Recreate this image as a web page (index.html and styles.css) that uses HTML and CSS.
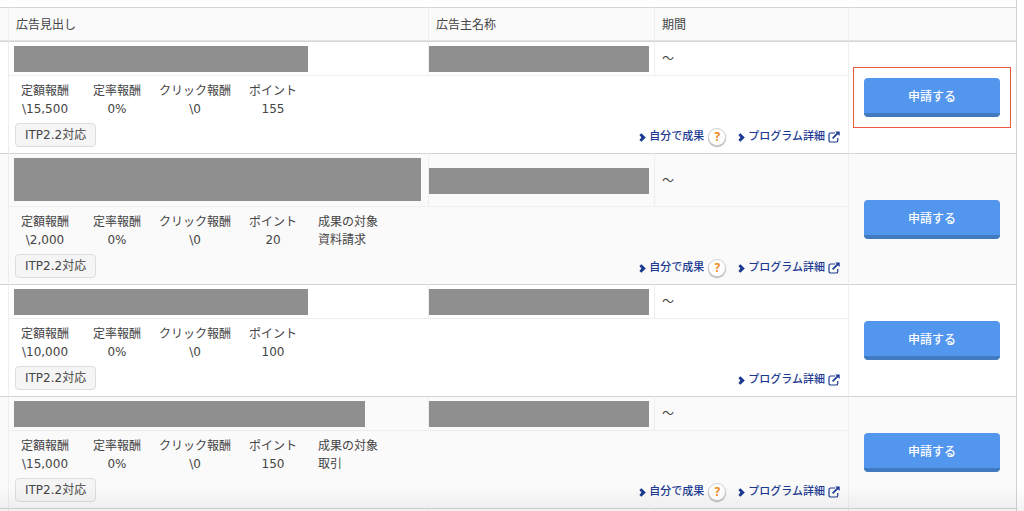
FILE: index.html
```html
<!DOCTYPE html>
<html lang="ja">
<head>
    <meta charset="utf-8">
    <meta name="viewport" content="width=device-width, initial-scale=1.0">
    <title>プログラム検索</title>
    <link rel="stylesheet" href="styles.css">
</head>
<body>
    <svg class="defs" width="0" height="0">
        <symbol id="arrow" viewBox="0 0 7 9">
            <path d="M0.4 2 L2.4 0.2 L6.8 4.5 L2.4 8.8 L0.4 7 L2.4 4.5 Z" fill="currentColor"/>
        </symbol>
        <symbol id="external" viewBox="0 0 12 12">
            <path d="M7 2 H2.6 Q1 2 1 3.6 V9.4 Q1 11 2.6 11 H8.2 Q9.8 11 9.8 9.4 V7" fill="none" stroke="currentColor" stroke-width="1.2"/>
            <path d="M4.6 7.4 L9.8 2.2" stroke="currentColor" stroke-width="1.7"/>
            <path d="M7.2 0.4 H11.7 V4.9 Z" fill="currentColor"/>
        </symbol>
    </svg>

    <div class="content">
        <table class="programs">
            <colgroup>
                <col class="col-edge">
                <col>
                <col class="col-owner">
                <col class="col-period">
                <col class="col-apply">
            </colgroup>
            <thead>
                <tr>
                    <th></th>
                    <th>広告見出し</th>
                    <th>広告主名称</th>
                    <th>期間</th>
                    <th></th>
                </tr>
            </thead>

            <tbody>
                <tr class="title">
                    <td rowspan="2"></td>
                    <td><div class="mask mask-s"></div></td>
                    <td class="owner"><div class="mask"></div></td>
                    <td class="period">～</td>
                    <td rowspan="2" class="apply"><div class="marked"><button type="button" class="btn">申請する</button></div></td>
                </tr>
                <tr>
                    <td colspan="3" class="detail">
                        <div class="detail-row">
                            <div>
                                <dl class="rewards">
                                    <div><dt>定額報酬</dt><dd>\15,500</dd></div>
                                    <div><dt>定率報酬</dt><dd>0%</dd></div>
                                    <div><dt>クリック報酬</dt><dd>\0</dd></div>
                                    <div><dt>ポイント</dt><dd>155</dd></div>
                                </dl>
                                <span class="badge">ITP2.2対応</span>
                            </div>
                            <div class="links">
                                <a href="#"><svg class="arrow"><use href="#arrow"/></svg>自分で成果</a>
                                <button type="button" class="help">?</button>
                                <a href="#"><svg class="arrow"><use href="#arrow"/></svg>プログラム詳細<svg class="external"><use href="#external"/></svg></a>
                            </div>
                        </div>
                    </td>
                </tr>
            </tbody>

            <tbody>
                <tr class="title">
                    <td rowspan="2"></td>
                    <td><div class="mask mask-l"></div></td>
                    <td class="owner"><div class="mask"></div></td>
                    <td class="period">～</td>
                    <td rowspan="2" class="apply"><button type="button" class="btn">申請する</button></td>
                </tr>
                <tr>
                    <td colspan="3" class="detail">
                        <div class="detail-row">
                            <div>
                                <dl class="rewards">
                                    <div><dt>定額報酬</dt><dd>\2,000</dd></div>
                                    <div><dt>定率報酬</dt><dd>0%</dd></div>
                                    <div><dt>クリック報酬</dt><dd>\0</dd></div>
                                    <div><dt>ポイント</dt><dd>20</dd></div>
                                    <div class="target"><dt>成果の対象</dt><dd>資料請求</dd></div>
                                </dl>
                                <span class="badge">ITP2.2対応</span>
                            </div>
                            <div class="links">
                                <a href="#"><svg class="arrow"><use href="#arrow"/></svg>自分で成果</a>
                                <button type="button" class="help">?</button>
                                <a href="#"><svg class="arrow"><use href="#arrow"/></svg>プログラム詳細<svg class="external"><use href="#external"/></svg></a>
                            </div>
                        </div>
                    </td>
                </tr>
            </tbody>

            <tbody>
                <tr class="title">
                    <td rowspan="2"></td>
                    <td><div class="mask mask-s"></div></td>
                    <td class="owner"><div class="mask"></div></td>
                    <td class="period">～</td>
                    <td rowspan="2" class="apply"><button type="button" class="btn">申請する</button></td>
                </tr>
                <tr>
                    <td colspan="3" class="detail">
                        <div class="detail-row">
                            <div>
                                <dl class="rewards">
                                    <div><dt>定額報酬</dt><dd>\10,000</dd></div>
                                    <div><dt>定率報酬</dt><dd>0%</dd></div>
                                    <div><dt>クリック報酬</dt><dd>\0</dd></div>
                                    <div><dt>ポイント</dt><dd>100</dd></div>
                                </dl>
                                <span class="badge">ITP2.2対応</span>
                            </div>
                            <div class="links">
                                <a href="#"><svg class="arrow"><use href="#arrow"/></svg>プログラム詳細<svg class="external"><use href="#external"/></svg></a>
                            </div>
                        </div>
                    </td>
                </tr>
            </tbody>

            <tbody>
                <tr class="title">
                    <td rowspan="2"></td>
                    <td><div class="mask mask-m"></div></td>
                    <td class="owner"><div class="mask"></div></td>
                    <td class="period">～</td>
                    <td rowspan="2" class="apply"><button type="button" class="btn">申請する</button></td>
                </tr>
                <tr>
                    <td colspan="3" class="detail">
                        <div class="detail-row">
                            <div>
                                <dl class="rewards">
                                    <div><dt>定額報酬</dt><dd>\15,000</dd></div>
                                    <div><dt>定率報酬</dt><dd>0%</dd></div>
                                    <div><dt>クリック報酬</dt><dd>\0</dd></div>
                                    <div><dt>ポイント</dt><dd>150</dd></div>
                                    <div class="target"><dt>成果の対象</dt><dd>取引</dd></div>
                                </dl>
                                <span class="badge">ITP2.2対応</span>
                            </div>
                            <div class="links">
                                <a href="#"><svg class="arrow"><use href="#arrow"/></svg>自分で成果</a>
                                <button type="button" class="help">?</button>
                                <a href="#"><svg class="arrow"><use href="#arrow"/></svg>プログラム詳細<svg class="external"><use href="#external"/></svg></a>
                            </div>
                        </div>
                    </td>
                </tr>
            </tbody>

            <tbody>
                <tr class="blank">
                    <td></td>
                    <td></td>
                    <td></td>
                    <td></td>
                    <td></td>
                </tr>
            </tbody>
        </table>
    </div>
    <div class="fade"></div>
</body>
</html>
```
FILE: styles.css
```css
* {
    box-sizing: border-box;
}
body {
    margin: 0;
    background: #fff;
    color: #444;
    font-family: "DejaVu Sans", "Noto Sans CJK JP", sans-serif;
    font-size: 12px;
    line-height: 18px;
}
.defs {
    position: absolute;
}
.content {
    margin-right: 7px;
    padding-top: 7px;
    border-right: 1px solid #d4d4d4;
}

/* table */
.programs {
    width: 100%;
    table-layout: fixed;
    border-collapse: separate;
    border-spacing: 0;
}
.col-edge {
    width: 9px;
}
.col-owner {
    width: 226px;
}
.col-period {
    width: 194px;
}
.col-apply {
    width: 167px;
}
th {
    height: 34px;
    padding: 2px 7px 0;
    background: #fafafa;
    border-top: 1px solid #d4d4d4;
    border-right: 1px solid #eee;
    border-bottom: 1px solid #e2e2e2;
    font-weight: normal;
    text-align: left;
}
td {
    padding: 0;
    border-right: 1px solid #eee;
}
th:first-child,
.title td:first-child {
    padding: 0;
}
th:last-child,
.title td:last-child,
.blank td:last-child {
    border-right: 0;
}
.title td {
    height: 35px;
    padding: 4px 5px 3px;
    border-top: 1px solid #d4d4d4;
    border-bottom: 1px solid #eee;
}
.title td[rowspan] {
    border-bottom: 0;
}
.title td.owner {
    padding: 4px 5px 3px 0;
}
.title td.period {
    padding: 1px 7px 0;
}
.title td.apply {
    padding: 0 16px 0 15px;
}
.blank td {
    height: 3px;
    border-top: 1px solid #d4d4d4;
}
tbody:nth-of-type(even) td {
    background: #fafafa;
}

.mask {
    height: 26px;
    background: #8f8f8f;
}
.mask-s {
    width: 294px;
}
.mask-m {
    width: 351px;
}
.mask-l {
    width: 407px;
    height: 43px;
    margin-bottom: 2px;
}

/* detail */
.detail {
    padding: 6px 8px 6px 6px;
}
.detail-row {
    display: flex;
    justify-content: space-between;
    align-items: flex-end;
}
.rewards {
    display: flex;
    gap: 12px;
    margin: 0 0 5px;
}
.rewards div {
    min-width: 60px;
    text-align: center;
}
.rewards .target {
    padding-left: 3px;
    text-align: left;
}
dd {
    margin: 0;
}
.badge {
    display: block;
    width: fit-content;
    padding: 2px 9px;
    background: #f5f5f5;
    border: 1px solid #ddd;
    border-radius: 4px;
}

.links {
    display: flex;
    align-items: center;
    height: 20px;
}
.links a {
    display: flex;
    align-items: center;
    color: #1c3a92;
    font-size: 11px;
    font-weight: 500;
    text-decoration: none;
}
.arrow {
    width: 7px;
    height: 9px;
    margin-right: 3px;
}
.external {
    width: 12px;
    height: 12px;
    margin-left: 3px;
}
.help {
    width: 18px;
    height: 18px;
    margin: 0 12px 0 4px;
    padding: 0;
    background: #fff;
    border: 1px solid #d4d4d4;
    border-radius: 50%;
    box-shadow: 0 1px 1px #aaa;
    color: #f08a24;
    font-family: "Open Sans", sans-serif;
    font-size: 12px;
    font-weight: bold;
    line-height: 16px;
}

/* apply button */
.btn {
    display: block;
    width: 100%;
    height: 39px;
    padding: 0;
    background: #5396ee;
    border: 0;
    border-bottom: 4px solid #417abf;
    border-radius: 4px;
    color: #fff;
    font-family: "Noto Sans CJK JP", sans-serif;
    font-size: 12px;
    font-weight: 500;
    cursor: pointer;
}
.marked {
    outline: 1px solid #ec5b40;
    outline-offset: 10px;
}

.fade {
    position: fixed;
    right: 0;
    bottom: 0;
    left: 0;
    height: 24px;
    background: linear-gradient(rgba(0, 0, 0, 0), rgba(0, 0, 0, 0.05));
    pointer-events: none;
}
```
